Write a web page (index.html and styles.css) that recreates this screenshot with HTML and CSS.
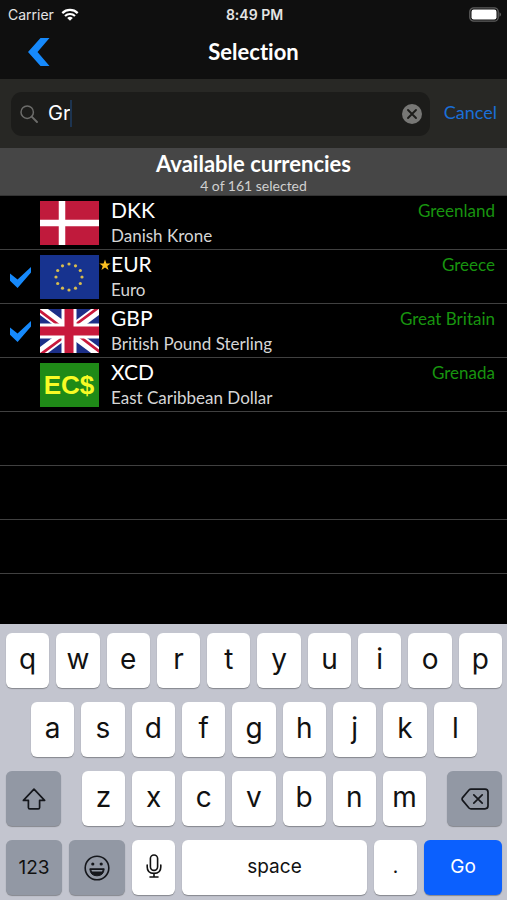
FILE: index.html
```html
<!DOCTYPE html>
<html lang="en">
<head>
    <meta charset="UTF-8">
    <meta name="viewport" content="width=device-width, initial-scale=1.0">
    <title>Selection</title>
    <link rel="stylesheet" href="styles.css">
</head>
<body>
    <div class="app">
        <div class="status-bar">
            <div class="carrier">
                <span>Carrier</span>
                <svg class="wifi" viewBox="0 0 18 13" aria-hidden="true">
                    <path d="M1.3 5.1a11 11 0 0 1 15.4 0M4 8a7.2 7.2 0 0 1 10 0" fill="none" stroke="#fff" stroke-width="2.2"/>
                    <path d="M6.2 10a4 4 0 0 1 5.6 0L9 12.8z" fill="#fff"/>
                </svg>
            </div>
            <span class="time">8:49 PM</span>
            <svg class="battery" viewBox="0 0 32 15" aria-hidden="true">
                <rect x=".8" y=".8" width="28.4" height="13.4" rx="4" fill="none" stroke="#5e5e5e" stroke-width="1.3"/>
                <rect x="2.5" y="2.5" width="25" height="10" rx="2.2" fill="#fff"/>
                <path d="M30.5 5.2q1.5.8 1.5 2.3t-1.5 2.3z" fill="#5e5e5e"/>
            </svg>
        </div>

        <header class="nav-bar">
            <button class="back-button" type="button" aria-label="Back">
                <svg viewBox="0 0 22 28"><path d="M12.5 0H21.5L9.5 14L21.5 28H12.5L0 14z" fill="#1689fb"/></svg>
            </button>
            <h1>Selection</h1>
        </header>

        <form class="search-bar">
            <div class="search-field">
                <svg class="search-icon" viewBox="0 0 18 18" aria-hidden="true">
                    <circle cx="7.2" cy="7.2" r="6.2" fill="none" stroke="#6c6c6a" stroke-width="1.5"/>
                    <path d="M11.7 11.7L17 17" stroke="#6c6c6a" stroke-width="1.9" stroke-linecap="round"/>
                </svg>
                <input class="search-input" type="text" size="2" value="Gr" aria-label="Search currencies">
                <span class="caret"></span>
                <button class="clear-button" type="button" aria-label="Clear">
                    <svg viewBox="0 0 20 20">
                        <circle cx="10" cy="10" r="10" fill="#777775"/>
                        <path d="M6 6l8 8M14 6l-8 8" stroke="#1c1c1a" stroke-width="1.9" stroke-linecap="round"/>
                    </svg>
                </button>
            </div>
            <button class="cancel-button" type="button">Cancel</button>
        </form>

        <div class="section-header">
            <h2>Available currencies</h2>
            <p>4 of 161 selected</p>
        </div>

        <ul class="currency-list">
            <li>
                <label class="row">
                    <input class="check" type="checkbox">
                    <svg class="flag" viewBox="0 0 59 44" aria-hidden="true">
                        <rect width="59" height="44" fill="#c01a3c"/>
                        <path d="M22 0V44M0 22H59" stroke="#fff" stroke-width="6.5"/>
                    </svg>
                    <span class="star"></span>
                    <span class="names">
                        <span class="code">DKK</span>
                        <span class="name">Danish Krone</span>
                    </span>
                    <span class="country">Greenland</span>
                </label>
            </li>
            <li>
                <label class="row">
                    <input class="check" type="checkbox" checked>
                    <svg class="flag" viewBox="0 0 59 44" aria-hidden="true">
                        <rect width="59" height="44" fill="#17338f"/>
                        <g fill="#d9bd4e">
                            <circle cx="29" cy="9" r="1.6"/><circle cx="35.5" cy="10.8" r="1.6"/>
                            <circle cx="40.3" cy="15.5" r="1.6"/><circle cx="42" cy="22" r="1.6"/>
                            <circle cx="40.3" cy="28.5" r="1.6"/><circle cx="35.5" cy="33.2" r="1.6"/>
                            <circle cx="29" cy="35" r="1.6"/><circle cx="22.5" cy="33.2" r="1.6"/>
                            <circle cx="17.7" cy="28.5" r="1.6"/><circle cx="16" cy="22" r="1.6"/>
                            <circle cx="17.7" cy="15.5" r="1.6"/><circle cx="22.5" cy="10.8" r="1.6"/>
                        </g>
                    </svg>
                    <span class="star">
                        <svg viewBox="0 0 12 12" aria-hidden="true"><path d="M6 .4l1.4 4h4.2L8.3 6.9l1.2 4.2L6 8.6l-3.5 2.5 1.2-4.2L.4 4.4h4.2z" fill="#fcc021"/></svg>
                    </span>
                    <span class="names">
                        <span class="code">EUR</span>
                        <span class="name">Euro</span>
                    </span>
                    <span class="country">Greece</span>
                </label>
            </li>
            <li>
                <label class="row">
                    <input class="check" type="checkbox" checked>
                    <svg class="flag" viewBox="0 0 59 44" aria-hidden="true">
                        <rect width="59" height="44" fill="#1c2f88"/>
                        <path d="M0 0L59 44M59 0L0 44" stroke="#fff" stroke-width="9.5"/>
                        <path d="M-1 1.2L28 23M31 21L60 43M58 -1L31 19M28 25L-1 46.5" stroke="#c8193c" stroke-width="2.8"/>
                        <path d="M29 0V44M0 22H59" stroke="#fff" stroke-width="15"/>
                        <path d="M29 0V44M0 22H59" stroke="#c8193c" stroke-width="9"/>
                    </svg>
                    <span class="star"></span>
                    <span class="names">
                        <span class="code">GBP</span>
                        <span class="name">British Pound Sterling</span>
                    </span>
                    <span class="country">Great Britain</span>
                </label>
            </li>
            <li>
                <label class="row">
                    <input class="check" type="checkbox">
                    <svg class="flag" viewBox="0 0 59 44" aria-hidden="true">
                        <rect width="59" height="44" fill="#1f8a17"/>
                        <text class="flag-text" x="29" y="31" text-anchor="middle">EC$</text>
                    </svg>
                    <span class="star"></span>
                    <span class="names">
                        <span class="code">XCD</span>
                        <span class="name">East Caribbean Dollar</span>
                    </span>
                    <span class="country">Grenada</span>
                </label>
            </li>
            <li></li>
            <li></li>
            <li></li>
        </ul>

        <div class="keyboard">
            <div class="key-row">
                <button class="key">q</button>
                <button class="key">w</button>
                <button class="key">e</button>
                <button class="key">r</button>
                <button class="key">t</button>
                <button class="key">y</button>
                <button class="key">u</button>
                <button class="key">i</button>
                <button class="key">o</button>
                <button class="key">p</button>
            </div>
            <div class="key-row key-row-inset">
                <button class="key">a</button>
                <button class="key">s</button>
                <button class="key">d</button>
                <button class="key">f</button>
                <button class="key">g</button>
                <button class="key">h</button>
                <button class="key">j</button>
                <button class="key">k</button>
                <button class="key">l</button>
            </div>
            <div class="key-row key-row-shift">
                <button class="key key-dark" aria-label="Shift">
                    <svg class="icon-shift" viewBox="0 0 24 22"><path d="M12 1.2L22.6 12.4H17.6V19.4Q17.6 20.8 16.2 20.8H7.8Q6.4 20.8 6.4 19.4V12.4H1.4z" fill="none" stroke="#15171c" stroke-width="1.7" stroke-linejoin="round"/></svg>
                </button>
                <div class="key-group">
                    <button class="key">z</button>
                    <button class="key">x</button>
                    <button class="key">c</button>
                    <button class="key">v</button>
                    <button class="key">b</button>
                    <button class="key">n</button>
                    <button class="key">m</button>
                </div>
                <button class="key key-dark" aria-label="Delete">
                    <svg class="icon-delete" viewBox="0 0 28 22" fill="none" stroke="#15171c" stroke-width="1.7" stroke-linejoin="round" stroke-linecap="round">
                        <path d="M10 1.2H24Q27 1.2 27 4.2V17.8Q27 20.8 24 20.8H10Q8.8 20.8 8 20L1.6 12.4Q.6 11 1.6 9.6L8 2Q8.8 1.2 10 1.2z"/>
                        <path d="M12.8 6.8l8.4 8.4M21.2 6.8l-8.4 8.4"/>
                    </svg>
                </button>
            </div>
            <div class="key-row key-row-bottom">
                <button class="key key-dark key-label">123</button>
                <button class="key key-dark" aria-label="Emoji">
                    <svg class="icon-emoji" viewBox="0 0 26 26">
                        <circle cx="13" cy="13" r="11.8" fill="none" stroke="#15171c" stroke-width="1.6"/>
                        <circle cx="8.8" cy="9" r="1.6" fill="#15171c"/>
                        <circle cx="17.2" cy="9" r="1.6" fill="#15171c"/>
                        <path d="M5.8 13.8H20.2Q19.6 20.8 13 20.8T5.8 13.8z" fill="#15171c" stroke="#15171c" stroke-linejoin="round"/>
                        <path d="M7.4 15H18.6L18 16.6H8z" fill="#9299a5"/>
                    </svg>
                </button>
                <button class="key" aria-label="Dictate">
                    <svg class="icon-mic" viewBox="0 0 16 24" fill="none" stroke="#111" stroke-width="1.6" stroke-linecap="round">
                        <rect x="4.4" y="1" width="7.2" height="15.4" rx="3.6"/>
                        <path d="M1.2 11V13Q1.2 19.4 8 19.4T14.8 13V11M8 19.4V23M4 23H12"/>
                    </svg>
                </button>
                <button class="key key-label">space</button>
                <button class="key key-label">.</button>
                <button class="key key-go key-label">Go</button>
            </div>
        </div>
    </div>
</body>
</html>
```
FILE: styles.css
```css
* {
    box-sizing: border-box;
}
body {
    margin: 0;
    background: #000;
    color: #fff;
    font-family: Lato, "Open Sans", sans-serif;
    font-variant-ligatures: none;
}
h1, h2, p, ul {
    margin: 0;
    padding: 0;
}
button {
    border: none;
    padding: 0;
    background: none;
    font-family: inherit;
    cursor: pointer;
}
svg {
    display: block;
}
.app {
    display: flex;
    flex-direction: column;
    min-height: 100vh;
}

/* status bar */
.status-bar {
    display: grid;
    grid-template-columns: 1fr auto 1fr;
    align-items: center;
    height: 28px;
    padding: 0 6px 0 8px;
    background: #0f0f0f;
    font-family: Inter, sans-serif;
    font-size: 14px;
    color: #e4e4e4;
}
.carrier {
    display: flex;
    align-items: center;
    gap: 7px;
}
.wifi {
    width: 18px;
    height: 13px;
}
.time {
    font-weight: 600;
}
.battery {
    width: 32px;
    height: 15px;
    justify-self: end;
}

/* navigation */
.nav-bar {
    display: grid;
    grid-template-columns: 1fr auto 1fr;
    align-items: center;
    height: 51px;
    padding: 0 28px 4px;
    background: #0f0f0f;
}
.back-button {
    justify-self: start;
}
.back-button svg {
    width: 22px;
    height: 28px;
}
h1, h2 {
    font-size: 22px;
    font-weight: 700;
    line-height: 28px;
}

/* search */
.search-bar {
    display: flex;
    align-items: center;
    gap: 14px;
    height: 69px;
    padding: 0 10px 0 11px;
    background: #282825;
}
.search-field {
    display: flex;
    flex: 1;
    align-items: center;
    height: 44px;
    padding: 0 8px 0 9px;
    border-radius: 11px;
    background: #1c1c1a;
}
.search-icon {
    width: 18px;
    height: 18px;
    margin-right: 10px;
}
.search-input {
    field-sizing: content;
    border: none;
    outline: none;
    padding: 0 0 2px;
    background: none;
    color: #fff;
    font-family: Inter, sans-serif;
    font-size: 20px;
}
.caret {
    width: 2px;
    height: 27px;
    background: #1d3450;
}
.clear-button {
    margin-left: auto;
}
.clear-button svg {
    width: 20px;
    height: 20px;
}
.cancel-button {
    padding-bottom: 4px;
    color: #1a6fd8;
    font-size: 18px;
}

/* currencies */
.section-header {
    height: 48px;
    padding-top: 2px;
    border-bottom: 1px solid #333;
    background: #464646;
    text-align: center;
}
.section-header p {
    color: #d0d0d0;
    font-size: 14px;
    line-height: 16px;
}
.currency-list {
    flex: 1;
    list-style: none;
}
.currency-list li {
    height: 54px;
    border-bottom: 1px solid #404040;
}
.row {
    display: grid;
    grid-template-columns: 30px 59px 12px 1fr auto;
    padding: 1px 12px 0 10px;
}
.check {
    appearance: none;
    justify-self: start;
    width: 21px;
    height: 21px;
    margin: 16px 0 0;
}
.check:checked {
    background: #1689fb;
    clip-path: polygon(0 31%, 36% 60%, 100% 0, 100% 26%, 36% 100%, 0 66%);
}
.flag {
    width: 59px;
    height: 44px;
    margin-top: 4px;
}
.flag-text {
    fill: #f7fb25;
    font-family: "Liberation Sans", sans-serif;
    font-size: 26px;
    font-weight: 700;
}
.star {
    padding-top: 8px;
}
.star svg {
    width: 12px;
    height: 12px;
}
.names {
    display: flex;
    flex-direction: column;
    line-height: 26px;
}
.code {
    font-size: 21px;
}
.name {
    color: #d6d6d6;
    font-size: 17px;
}
.country {
    color: #18940f;
    font-size: 17px;
    line-height: 28px;
}

/* keyboard */
.keyboard {
    display: flex;
    flex-direction: column;
    gap: 14px;
    padding: 9px 5px 5px 6px;
    background: #c3c5cf;
    font-family: Inter, sans-serif;
}
.key-row {
    display: flex;
    gap: 7px;
}
.key-row-inset {
    padding: 0 25px;
}
.key-row-shift {
    display: grid;
    grid-template-columns: 55px 1fr 55px;
    gap: 21px;
}
.key-row-bottom {
    display: grid;
    grid-template-columns: 56px 56px 43px 1fr 43px 78px;
}
.key-group {
    display: flex;
    gap: 7px;
}
.key {
    display: flex;
    flex: 1;
    align-items: center;
    justify-content: center;
    height: 55px;
    padding-bottom: 3px;
    border-radius: 6px;
    background: #fff;
    box-shadow: 0 1px 1px #85878d;
    color: #111;
    font-size: 28px;
}
.key-label {
    font-size: 19px;
}
.key-dark {
    padding: 0;
    background: #9298a4;
}
.key-go {
    background: #0b60fe;
    color: #fff;
}
.icon-shift {
    width: 24px;
    height: 22px;
}
.icon-delete {
    width: 28px;
    height: 22px;
}
.icon-emoji {
    width: 26px;
    height: 26px;
}
.icon-mic {
    width: 16px;
    height: 24px;
}
```
